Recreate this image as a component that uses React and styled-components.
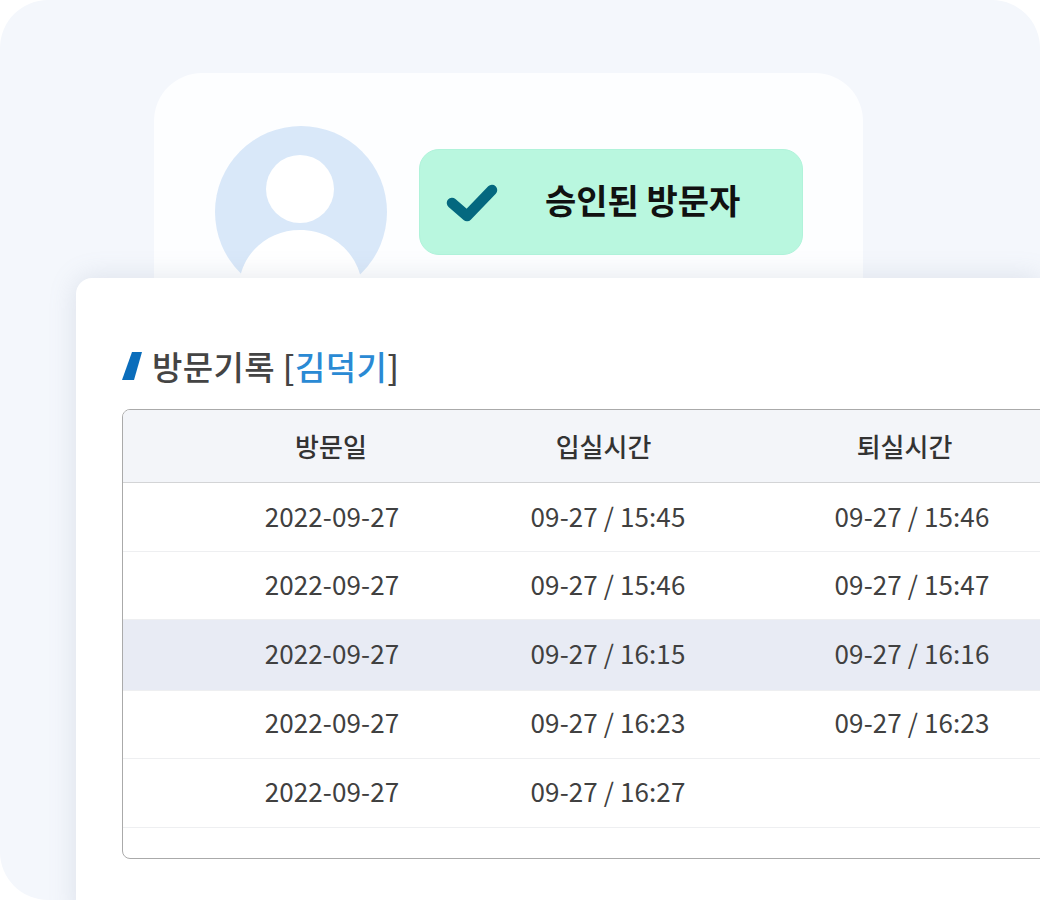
import React from "react";
import styled, { createGlobalStyle } from "styled-components";

const Global = createGlobalStyle`
  html, body { margin: 0; padding: 0; background: #fff; }
  body { font-family: "Noto Sans CJK KR", "Noto Sans", sans-serif; overflow: hidden; }
`;
const Stage = styled.div`
  width: 1040px; height: 900px; box-sizing: border-box; background: #f4f7fc;
  border-radius: 48px 48px 0 48px; overflow: hidden; padding-top: 73px;
`;
const ProfileCard = styled.section`
  width: 709px; height: 260px; box-sizing: border-box; margin-left: 154px;
  background: #fdfeff; border-radius: 48px 48px 0 0;
  padding: 53px 60px 0 61px; display: flex; gap: 32px;
`;
const Avatar = styled.div`
  width: 172px; height: 172px; flex: none; display: block;
`;
const Badge = styled.div`
  width: 384px; height: 106px; margin-top: 23px; box-sizing: border-box;
  background: #b9f7df; border: 1px solid #b0f3da; border-radius: 20px;
  display: flex; align-items: center; padding-left: 26px;
`;
const BadgeLabel = styled.span`
  margin: 0 0 5px 47px; font-size: 34px; font-weight: 700; color: #111; line-height: 1;
`;
const Panel = styled.main`
  position: relative; margin: -55px 0 0 76px; height: 640px; box-sizing: border-box;
  background: #fff; border-radius: 16px 0 0 0; padding: 66px 0 0 47px;
  box-shadow: 0 0 28px rgba(120, 135, 160, 0.2); overflow: hidden;
`;
const Title = styled.h2`
  margin: 0 0 21px -1px; height: 44px; display: flex; align-items: center; gap: 10px;
  font-size: 33px; font-weight: 500; color: #444; line-height: 44px; letter-spacing: 0.4px;
`;
const Name = styled.span` color: #2a8ad4; `;
const TableFrame = styled.div`
  width: 1000px; height: 450px; box-sizing: border-box; margin-left: -1px;
  border: 1px solid #aaa; border-radius: 8px; overflow: hidden;
`;
const Row = styled.div`
  display: grid; grid-template-columns: ${p => p.$cols || "67px 284px 268px 340px"}; height: ${p => p.$h || 69}px;
  box-sizing: border-box; align-items: center; text-align: center;
  padding-bottom: ${p => p.$pb ?? 2}px;
  background: ${p => p.$bg || "transparent"};
  border-bottom: 1px solid ${p => p.$line || "#eeeff1"};
  color: ${p => p.$color || "#404040"}; font-size: ${p => p.$size || 26}px; font-weight: ${p => p.$weight || 400};
  line-height: 1; letter-spacing: ${p => p.$ls || "0.1px"};
`;

const rows = [
  ["2022-09-27", "09-27 / 15:45", "09-27 / 15:46", 69, 2],
  ["2022-09-27", "09-27 / 15:46", "09-27 / 15:47", 68, 4],
  ["2022-09-27", "09-27 / 16:15", "09-27 / 16:16", 71, 4, "#e8ebf4"],
  ["2022-09-27", "09-27 / 16:23", "09-27 / 16:23", 68, 5],
  ["2022-09-27", "09-27 / 16:27", "", 69, 4],
];

export default function App() {
  return (
    <>
      <Global />
      <Stage>
        <ProfileCard>
          <Avatar>
            <svg width="172" height="172" viewBox="0 0 172 172">
              <circle cx="86" cy="86" r="86" fill="#d9e8f9" />
              <circle cx="85" cy="63" r="34" fill="#fff" />
              <path d="M24 172 V158 C27 126 54 104 85 104 C116 104 143 126 147 158 V172 Z" fill="#fff" />
            </svg>
          </Avatar>
          <Badge>
            <svg width="52" height="40" viewBox="0 0 52 40">
              <path d="M6 21 L21 34 L46 8" fill="none" stroke="#04687f" strokeWidth="10.5" strokeLinecap="round" strokeLinejoin="round" />
            </svg>
            <BadgeLabel>승인된 방문자</BadgeLabel>
          </Badge>
        </ProfileCard>
        <Panel>
          <Title>
            <svg width="20" height="28" viewBox="0 0 20 28">
              <path d="M10 0 H20 L12 28 H0 Z" fill="#0a6dbb" />
            </svg>
            <span>방문기록 [<Name>김덕기</Name>]</span>
          </Title>
          <TableFrame>
            <Row $h={73} $pb={0} $cols="66px 284px 261px 341px" $bg="#f3f5f9" $line="#d3d4d6" $color="#333" $size={26} $weight={500} $ls="0">
              <span /><span>방문일</span><span>입실시간</span><span>퇴실시간</span>
            </Row>
            {rows.map((r, i) => (
              <Row key={i} $h={r[3]} $pb={r[4]} $bg={r[5]}>
                <span /><span>{r[0]}</span><span>{r[1]}</span><span>{r[2]}</span>
              </Row>
            ))}
          </TableFrame>
        </Panel>
      </Stage>
    </>
  );
}
